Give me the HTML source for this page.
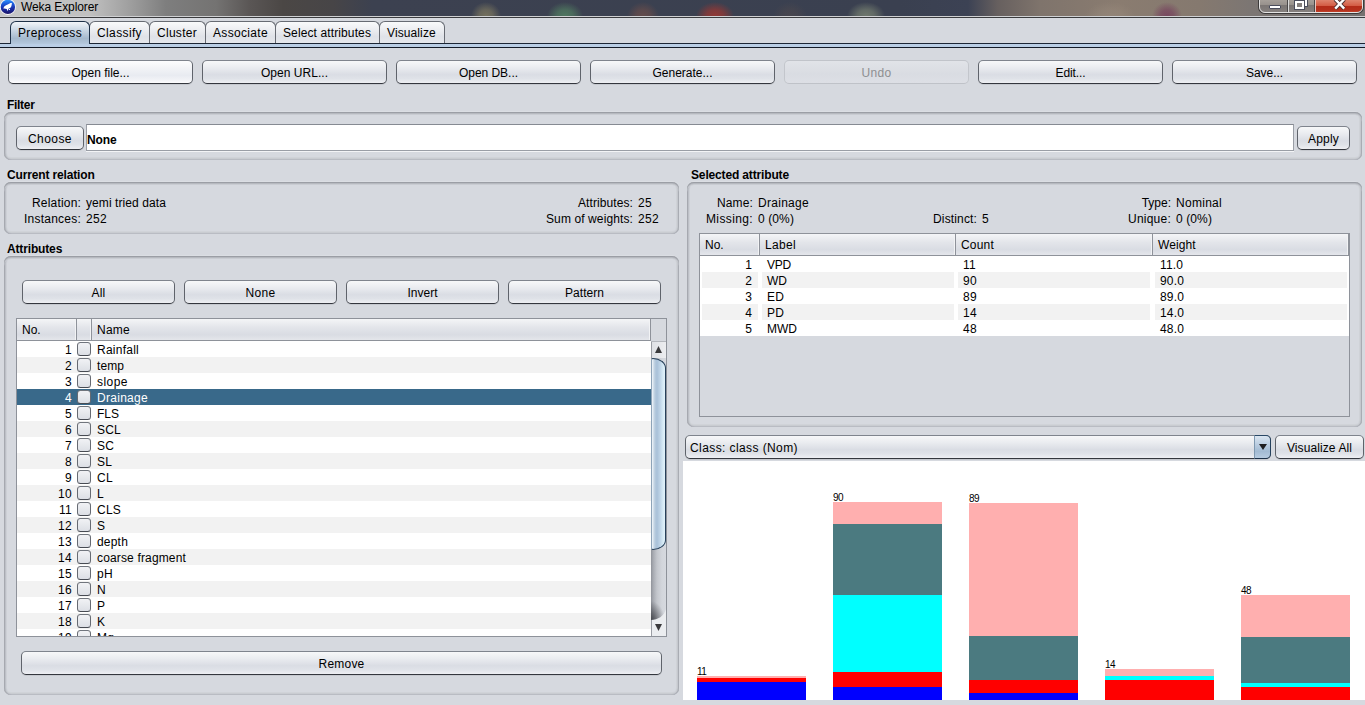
<!DOCTYPE html><html><head><meta charset="utf-8"><title>Weka Explorer</title><style>
*{box-sizing:border-box;margin:0;padding:0}
html,body{width:1365px;height:705px;overflow:hidden;background:#d6d9df;font-family:"Liberation Sans",sans-serif;font-size:12px;color:#000}
.a{position:absolute}
.btn{position:absolute;border:1px solid;border-color:#7f848d #5f636b #34373e #5f636b;border-radius:5px;background:linear-gradient(#f7f8f9 0%,#eaecf0 30%,#dadde4 62%,#dfe2e8 80%,#eeeff3 100%);text-align:center;box-shadow:0 1px 0 #c6c9cf;height:24px;line-height:24px;white-space:nowrap}
.lbl{position:absolute;font-weight:bold;white-space:nowrap;letter-spacing:-0.15px;line-height:14px}
.t{position:absolute;white-space:nowrap;line-height:14px}
.r{text-align:right}
.panel{position:absolute;border-radius:7px;box-shadow:0 -1px 0 0 #dbdee3,inset 0 1px 0 #9b9ea5,inset 0 2px 0 #b6b9bf,inset 0 3px 0 #c9ccd2,inset 1px 0 0 #a6a9b0,inset -1px 0 0 #a9acb3,inset 0 -1px 0 #b9bcc3,inset 2px 0 0 #bdc0c7,inset -2px 0 0 #c5c8ce,inset 0 -2px 0 #c9ccd1,inset 3px 0 0 #cdd0d6,inset -3px 0 0 #cfd2d7,inset 0 -3px 0 #d0d3d8}
.tab{position:absolute;top:21px;border:1px solid #676b73;border-bottom:none;border-radius:6px 6px 0 0;background:linear-gradient(#f9fafb,#e9ebef 45%,#dfe2e8 70%,#e6e8ed);text-align:left;padding-left:7px;line-height:22px;white-space:nowrap;height:22px}
.tab.sel{background:linear-gradient(#f2f5f9 0%,#c6d4e2 40%,#a5b9cd 75%,#b4c8dd 100%);border-color:#1e3148;height:23px}
.hdr{position:absolute;background:linear-gradient(#f4f5f7 0%,#e3e5ea 40%,#d9dce3 75%,#e4e6eb 100%);border-right:1px solid #8e929a;height:21px;line-height:23px;padding-left:5px;white-space:nowrap;box-shadow:inset -1px 0 0 #f2f3f5}
.row{position:absolute;height:16px;line-height:18px;white-space:nowrap}
.row span{line-height:18px}
.cb{position:absolute;width:14px;height:14px;border:1px solid;border-color:#70757d #666a72 #474b53 #666a72;border-radius:3.5px;background:linear-gradient(#f1f2f5,#dcdfe5)}
</style></head><body>
<div class="a" style="left:0;top:0;width:1365px;height:17px;background:linear-gradient(90deg,#c6c6c6 0px,#c0c0c0 90px,#9c9c9c 133px,#7e7e7e 166px,#747372 216px,#5a5655 250px,#4b4745 283px,#474547 333px,#3c4150 372px,#3a4050 900px,#3c4254 968px,#67605f 998px,#7f746c 1040px,#8a7c70 1120px,#85796f 1200px,#7c7673 1250px,#757170 1365px)"></div>
<div class="a" style="left:471px;top:2px;width:30px;height:14px;background:radial-gradient(ellipse 15px 14px at 50% 100%,rgba(135,128,98,0.75),rgba(135,128,98,0.5625) 45%,rgba(135,128,98,0) 100%)"></div>
<div class="a" style="left:547px;top:2px;width:36px;height:14px;background:radial-gradient(ellipse 18px 14px at 50% 100%,rgba(82,128,98,0.85),rgba(82,128,98,0.6375) 45%,rgba(82,128,98,0) 100%)"></div>
<div class="a" style="left:627px;top:2px;width:32px;height:14px;background:radial-gradient(ellipse 16px 14px at 50% 100%,rgba(125,82,72,0.6),rgba(125,82,72,0.44999999999999996) 45%,rgba(125,82,72,0) 100%)"></div>
<div class="a" style="left:696px;top:2px;width:38px;height:14px;background:radial-gradient(ellipse 19px 14px at 50% 100%,rgba(155,55,50,0.9),rgba(155,55,50,0.675) 45%,rgba(155,55,50,0) 100%)"></div>
<div class="a" style="left:773px;top:2px;width:34px;height:14px;background:radial-gradient(ellipse 17px 14px at 50% 100%,rgba(95,80,75,0.35),rgba(95,80,75,0.26249999999999996) 45%,rgba(95,80,75,0) 100%)"></div>
<div class="a" style="left:847px;top:2px;width:38px;height:14px;background:radial-gradient(ellipse 19px 14px at 50% 100%,rgba(128,138,118,0.75),rgba(128,138,118,0.5625) 45%,rgba(128,138,118,0) 100%)"></div>
<div class="a" style="left:1152px;top:2px;width:30px;height:14px;background:radial-gradient(ellipse 15px 14px at 50% 100%,rgba(110,40,85,0.6),rgba(110,40,85,0.44999999999999996) 45%,rgba(110,40,85,0) 100%)"></div>
<div class="a" style="left:1085px;top:2px;width:50px;height:14px;background:radial-gradient(ellipse 25px 14px at 50% 100%,rgba(160,145,130,0.4),rgba(160,145,130,0.30000000000000004) 45%,rgba(160,145,130,0) 100%)"></div>
<div class="a" style="left:0;top:16px;width:1365px;height:1px;background:#cfd0d2"></div>
<div class="a" style="left:0;top:17px;width:1365px;height:1px;background:#3a3b3e"></div>
<svg class="a" style="left:0;top:0" width="17" height="16" viewBox="0 0 17 16"><defs><linearGradient id="ig" x1="0" y1="0" x2="0" y2="1"><stop offset="0" stop-color="#2f96ff"/><stop offset=".3" stop-color="#1c58d8"/><stop offset=".6" stop-color="#1a2fa8"/><stop offset="1" stop-color="#1c1466"/></linearGradient></defs><circle cx="7.9" cy="6.9" r="8" fill="#fff" fill-opacity=".9"/><circle cx="7.9" cy="6.9" r="7.2" fill="url(#ig)"/><path d="M3.3 8.6 L4.2 6.6 L6 5.2 L8.2 4.2 L10.5 3 L11.9 3.1 L11.7 4.8 L11.3 6.5 L10.2 8 L8.7 8.6 L8.3 9.6 L7.6 10.9 L7 10 L6.8 8.9 L5.5 8.7 L4.3 8.4 Z" fill="#fff"/><circle cx="9.5" cy="9.4" r=".55" fill="#fff"/></svg>
<div class="t" style="left:21px;top:0px;font-size:12px;line-height:15px;letter-spacing:-0.1px">Weka Explorer</div>
<div class="a" style="left:1259px;top:-2px;width:104px;height:15px;border:1px solid #e4e4e4;border-radius:0 0 6px 6px;box-shadow:0 0 0 1px #3c3a3a;background:linear-gradient(#a8a29c 0%,#97918c 45%,#7b7674 50%,#85807e 100%);overflow:hidden"><div class="a" style="left:54px;top:0;width:49px;height:15px;background:linear-gradient(#e08a74 0%,#d35c44 45%,#b42c18 50%,#b5301c 75%,#d0583c 100%)"></div><div class="a" style="left:28px;top:0;width:1px;height:15px;background:#dcdcdc;box-shadow:-1px 0 0 #4a4848"></div><div class="a" style="left:55px;top:0;width:1px;height:15px;background:#e8c8c0;box-shadow:-1px 0 0 #4a4848"></div><div class="a" style="left:9px;top:6px;width:12px;height:4px;background:#fff;border:1px solid #4a4d5c;border-radius:1px"></div><div class="a" style="left:39px;top:0px;width:8px;height:7px;border:2px solid #fff;outline:1px solid #4a4d5c"></div><div class="a" style="left:35px;top:2px;width:9px;height:8px;border:2px solid #fff;outline:1px solid #4a4d5c;background:#85807e"></div><svg class="a" style="left:73px;top:0" width="14" height="11" viewBox="0 0 14 11"><path d="M2.2 0.2 L11.2 9.6 M11.2 0.2 L2.2 9.6" stroke="#4a3030" stroke-width="4.2" fill="none"/><path d="M2.2 0.2 L11.2 9.6 M11.2 0.2 L2.2 9.6" stroke="#fff" stroke-width="2.4" fill="none"/></svg></div>
<div class="a" style="left:0;top:43px;width:1365px;height:1px;background:#1c2635"></div>
<div class="a" style="left:0;top:44px;width:1365px;height:3px;background:#bacee5"></div>
<div class="a" style="left:0;top:47px;width:1365px;height:1px;background:#131a26"></div>
<div class="tab" style="left:379px;width:66px"><span style="letter-spacing:0.109px">Visualize</span></div>
<div class="tab" style="left:275px;width:105px"><span style="letter-spacing:0.115px">Select attributes</span></div>
<div class="tab" style="left:205px;width:71px"><span style="letter-spacing:0.331px">Associate</span></div>
<div class="tab" style="left:149px;width:57px"><span style="letter-spacing:0.284px">Cluster</span></div>
<div class="tab" style="left:89px;width:61px"><span style="letter-spacing:0.374px">Classify</span></div>
<div class="tab sel" style="left:10px;width:80px"><span style="letter-spacing:0.331px">Preprocess</span></div>
<div class="btn" style="left:8px;top:60px;width:185px;background:linear-gradient(#fdfdfe 0%,#f3f4f7 30%,#e8ebf1 65%,#f1f2f6 85%,#fcfcfd 100%)">Open file...</div>
<div class="btn" style="left:202px;top:60px;width:185px"><span style="letter-spacing:0.028px">Open URL...</span></div>
<div class="btn" style="left:396px;top:60px;width:185px"><span style="letter-spacing:-0.036px">Open DB...</span></div>
<div class="btn" style="left:590px;top:60px;width:185px">Generate...</div>
<div class="btn" style="left:784px;top:60px;width:185px;color:#8e8f91;border-color:#c1c4ca #c3c6cc #bfc2c8 #c3c6cc;background:linear-gradient(#e1e3e8,#d9dce2 60%,#dddfe5);box-shadow:none"><span style="letter-spacing:0.328px">Undo</span></div>
<div class="btn" style="left:978px;top:60px;width:185px"><span style="letter-spacing:-0.097px">Edit...</span></div>
<div class="btn" style="left:1172px;top:60px;width:185px"><span style="letter-spacing:-0.051px">Save...</span></div>
<div class="lbl" style="left:7px;top:98px;letter-spacing:-0.3px">Filter</div>
<div class="panel" style="left:4px;top:112px;width:1358px;height:48px"></div>
<div class="btn" style="left:16px;top:126px;width:68px"><span style="letter-spacing:0.440px">Choose</span></div>
<div class="a" style="left:86px;top:124px;width:1208px;height:27px;background:#fff;border:1px solid #9a9ea6;border-top-color:#868a92;box-shadow:0 1px 0 #f3f4f6"></div>
<div class="lbl" style="left:87px;top:133px">None</div>
<div class="btn" style="left:1297px;top:126px;width:53px"><span style="letter-spacing:0.196px">Apply</span></div>
<div class="lbl" style="left:7px;top:168px">Current relation</div>
<div class="panel" style="left:4px;top:182px;width:675px;height:52px"></div>
<div class="t r" style="left:0px;width:81px;top:196px"><span style="letter-spacing:0.182px">Relation:</span></div><div class="t" style="left:86px;top:196px"><span style="letter-spacing:0.086px">yemi tried data</span></div>
<div class="t r" style="left:0px;width:81px;top:212px"><span style="letter-spacing:0.230px">Instances:</span></div><div class="t" style="left:86px;top:212px"><span style="letter-spacing:0.326px">252</span></div>
<div class="t r" style="left:500px;width:133px;top:196px"><span style="letter-spacing:0.089px">Attributes:</span></div><div class="t" style="left:638px;top:196px"><span style="letter-spacing:0.326px">25</span></div>
<div class="t r" style="left:500px;width:133px;top:212px"><span style="letter-spacing:0.109px">Sum of weights:</span></div><div class="t" style="left:638px;top:212px"><span style="letter-spacing:0.326px">252</span></div>
<div class="lbl" style="left:7px;top:242px">Attributes</div>
<div class="panel" style="left:4px;top:256px;width:675px;height:439px"></div>
<div class="btn" style="left:22px;top:280px;width:153px"><span style="letter-spacing:0.221px">All</span></div>
<div class="btn" style="left:184px;top:280px;width:153px"><span style="letter-spacing:0.328px">None</span></div>
<div class="btn" style="left:346px;top:280px;width:153px">Invert</div>
<div class="btn" style="left:508px;top:280px;width:153px"><span style="letter-spacing:0.044px">Pattern</span></div>
<div class="a" style="left:16px;top:318px;width:651px;height:319px;background:#fff;border:1px solid #8e929a;overflow:hidden">
<div class="hdr" style="left:0;top:0;width:60px">No.</div><div class="hdr" style="left:60px;top:0;width:15px"></div><div class="hdr" style="left:75px;top:0;width:559px"><span style="letter-spacing:0.248px">Name</span></div><div class="a" style="left:634px;top:0;width:15px;height:22px;background:#d6d9df"></div>
<div class="a" style="left:0;top:21px;width:634px;height:1px;background:#8e929a"></div>
<div class="row" style="left:0;top:22px;width:634px;background:#fff;color:#000"><span class="a r" style="left:0;width:55px"><span style="letter-spacing:0.326px">1</span></span><span class="cb" style="left:60px;top:1px"></span><span class="a" style="left:80px"><span style="letter-spacing:0.248px">Rainfall</span></span></div>
<div class="row" style="left:0;top:38px;width:634px;background:#f2f2f2;color:#000"><span class="a r" style="left:0;width:55px"><span style="letter-spacing:0.326px">2</span></span><span class="cb" style="left:60px;top:1px"></span><span class="a" style="left:80px"><span style="letter-spacing:0.081px">temp</span></span></div>
<div class="row" style="left:0;top:54px;width:634px;background:#fff;color:#000"><span class="a r" style="left:0;width:55px"><span style="letter-spacing:0.326px">3</span></span><span class="cb" style="left:60px;top:1px"></span><span class="a" style="left:80px"><span style="letter-spacing:0.463px">slope</span></span></div>
<div class="row" style="left:0;top:70px;width:634px;background:#39698a;color:#fff"><span class="a r" style="left:0;width:55px"><span style="letter-spacing:0.326px">4</span></span><span class="cb" style="left:60px;top:1px"></span><span class="a" style="left:80px"><span style="letter-spacing:0.288px">Drainage</span></span></div>
<div class="row" style="left:0;top:86px;width:634px;background:#fff;color:#000"><span class="a r" style="left:0;width:55px"><span style="letter-spacing:0.326px">5</span></span><span class="cb" style="left:60px;top:1px"></span><span class="a" style="left:80px">FLS</span></div>
<div class="row" style="left:0;top:102px;width:634px;background:#f2f2f2;color:#000"><span class="a r" style="left:0;width:55px"><span style="letter-spacing:0.326px">6</span></span><span class="cb" style="left:60px;top:1px"></span><span class="a" style="left:80px"><span style="letter-spacing:0.219px">SCL</span></span></div>
<div class="row" style="left:0;top:118px;width:634px;background:#fff;color:#000"><span class="a r" style="left:0;width:55px"><span style="letter-spacing:0.326px">7</span></span><span class="cb" style="left:60px;top:1px"></span><span class="a" style="left:80px"><span style="letter-spacing:0.165px">SC</span></span></div>
<div class="row" style="left:0;top:134px;width:634px;background:#f2f2f2;color:#000"><span class="a r" style="left:0;width:55px"><span style="letter-spacing:0.326px">8</span></span><span class="cb" style="left:60px;top:1px"></span><span class="a" style="left:80px"><span style="letter-spacing:0.161px">SL</span></span></div>
<div class="row" style="left:0;top:150px;width:634px;background:#fff;color:#000"><span class="a r" style="left:0;width:55px"><span style="letter-spacing:0.326px">9</span></span><span class="cb" style="left:60px;top:1px"></span><span class="a" style="left:80px"><span style="letter-spacing:0.330px">CL</span></span></div>
<div class="row" style="left:0;top:166px;width:634px;background:#f2f2f2;color:#000"><span class="a r" style="left:0;width:55px"><span style="letter-spacing:0.326px">10</span></span><span class="cb" style="left:60px;top:1px"></span><span class="a" style="left:80px"><span style="letter-spacing:0.326px">L</span></span></div>
<div class="row" style="left:0;top:182px;width:634px;background:#fff;color:#000"><span class="a r" style="left:0;width:55px"><span style="letter-spacing:0.326px">11</span></span><span class="cb" style="left:60px;top:1px"></span><span class="a" style="left:80px"><span style="letter-spacing:0.219px">CLS</span></span></div>
<div class="row" style="left:0;top:198px;width:634px;background:#f2f2f2;color:#000"><span class="a r" style="left:0;width:55px"><span style="letter-spacing:0.326px">12</span></span><span class="cb" style="left:60px;top:1px"></span><span class="a" style="left:80px">S</span></div>
<div class="row" style="left:0;top:214px;width:634px;background:#fff;color:#000"><span class="a r" style="left:0;width:55px"><span style="letter-spacing:0.326px">13</span></span><span class="cb" style="left:60px;top:1px"></span><span class="a" style="left:80px"><span style="letter-spacing:0.194px">depth</span></span></div>
<div class="row" style="left:0;top:230px;width:634px;background:#f2f2f2;color:#000"><span class="a r" style="left:0;width:55px"><span style="letter-spacing:0.326px">14</span></span><span class="cb" style="left:60px;top:1px"></span><span class="a" style="left:80px"><span style="letter-spacing:0.153px">coarse fragment</span></span></div>
<div class="row" style="left:0;top:246px;width:634px;background:#fff;color:#000"><span class="a r" style="left:0;width:55px"><span style="letter-spacing:0.326px">15</span></span><span class="cb" style="left:60px;top:1px"></span><span class="a" style="left:80px"><span style="letter-spacing:0.330px">pH</span></span></div>
<div class="row" style="left:0;top:262px;width:634px;background:#f2f2f2;color:#000"><span class="a r" style="left:0;width:55px"><span style="letter-spacing:0.326px">16</span></span><span class="cb" style="left:60px;top:1px"></span><span class="a" style="left:80px"><span style="letter-spacing:0.334px">N</span></span></div>
<div class="row" style="left:0;top:278px;width:634px;background:#fff;color:#000"><span class="a r" style="left:0;width:55px"><span style="letter-spacing:0.326px">17</span></span><span class="cb" style="left:60px;top:1px"></span><span class="a" style="left:80px">P</span></div>
<div class="row" style="left:0;top:294px;width:634px;background:#f2f2f2;color:#000"><span class="a r" style="left:0;width:55px"><span style="letter-spacing:0.326px">18</span></span><span class="cb" style="left:60px;top:1px"></span><span class="a" style="left:80px">K</span></div>
<div class="row" style="left:0;top:310px;width:634px;background:#fff;color:#000"><span class="a r" style="left:0;width:55px"><span style="letter-spacing:0.326px">19</span></span><span class="cb" style="left:60px;top:1px"></span><span class="a" style="left:80px"><span style="letter-spacing:0.165px">Mg</span></span></div>
<div class="a" style="left:634px;top:22px;width:15px;height:295px;background:linear-gradient(90deg,#8f9299 0,#a6a9b0 2px,#c3c6cc 6px,#d3d6dc 11px,#d6d9df 15px)"></div>
<div class="a" style="left:634px;top:280px;width:15px;height:22px;background:radial-gradient(ellipse 14px 20px at 0% 100%,rgba(50,52,58,.85),rgba(50,52,58,.35) 60%,rgba(50,52,58,0) 100%)"></div>
<div class="a" style="left:634px;top:22px;width:15px;height:17px;background:linear-gradient(90deg,#9a9da4 0,#9a9da4 1px,#dfe1e5 1px,#ecedf0 15px);border-top:1px solid #b4b7bd"></div>
<svg class="a" style="left:638px;top:27px" width="8" height="7"><path d="M0 7 L3.5 0 L7 7 Z" fill="#3a3a3c"/></svg>
<div class="a" style="left:634px;top:39px;width:15px;height:192px;border:1px solid #27405a;border-left-color:#8da3b8;border-radius:2px 13px 13px 2px / 2px 10px 10px 2px;background:linear-gradient(90deg,#f2f6fa 0,#dbe6f0 1px,#b6cadd 3px,#a9c1d9 5px,#bdd3e6 8px,#d6eaf5 11px,#e6f5fc 14px)"></div>
<svg class="a" style="left:634px;top:288px" width="15" height="29"><path d="M0 13 C7 13 13 9 15 2 L15 29 L0 29 Z" fill="#ebedf0"/><path d="M0 13 L1 13 L1 29 L0 29 Z" fill="#9a9da4"/><path d="M4 17 L11 17 L7.5 24 Z" fill="#3a3a3c"/></svg>
</div>
<div class="btn" style="left:21px;top:651px;width:641px"><span style="letter-spacing:0.219px">Remove</span></div>
<div class="lbl" style="left:691px;top:168px">Selected attribute</div>
<div class="panel" style="left:687px;top:182px;width:675px;height:245px"></div>
<div class="t r" style="left:690px;width:63px;top:196px"><span style="letter-spacing:0.131px">Name:</span></div><div class="t" style="left:758px;top:196px"><span style="letter-spacing:0.288px">Drainage</span></div>
<div class="t r" style="left:690px;width:63px;top:212px"><span style="letter-spacing:0.374px">Missing:</span></div><div class="t" style="left:758px;top:212px"><span style="letter-spacing:0.109px">0 (0%)</span></div>
<div class="t r" style="left:900px;width:77px;top:212px"><span style="letter-spacing:0.147px">Distinct:</span></div><div class="t" style="left:982px;top:212px">5</div>
<div class="t r" style="left:1100px;width:71px;top:196px">Type:</div><div class="t" style="left:1176px;top:196px"><span style="letter-spacing:0.283px">Nominal</span></div>
<div class="t r" style="left:1100px;width:71px;top:212px"><span style="letter-spacing:0.234px">Unique:</span></div><div class="t" style="left:1176px;top:212px"><span style="letter-spacing:0.109px">0 (0%)</span></div>
<div class="a" style="left:699px;top:233px;width:651px;height:184px;border:1px solid #8e929a;overflow:hidden">
<div class="hdr" style="left:0;top:0;width:60px">No.</div><div class="hdr" style="left:60px;top:0;width:196px"><span style="letter-spacing:0.328px">Label</span></div><div class="hdr" style="left:256px;top:0;width:197px"><span style="letter-spacing:0.196px">Count</span></div><div class="hdr" style="left:453px;top:0;width:196px;"><span style="letter-spacing:0.109px">Weight</span></div>
<div class="a" style="left:0;top:21px;width:650px;height:1px;background:#8e929a"></div>
<div class="row" style="left:0;top:22px;width:649px;background:#fff"><span class="a" style="left:2px;width:56px;height:16px;background:#fff"></span><span class="a" style="left:62px;width:192px;height:16px;background:#fff"></span><span class="a" style="left:258px;width:192px;height:16px;background:#fff"></span><span class="a" style="left:455px;width:192px;height:16px;background:#fff"></span><span class="a r" style="left:0;width:52px">1</span><span class="a" style="left:67px"><span style="letter-spacing:-0.225px">VPD</span></span><span class="a" style="left:263px"><span style="letter-spacing:0.326px">11</span></span><span class="a" style="left:460px"><span style="letter-spacing:0.161px">11.0</span></span></div>
<div class="row" style="left:0;top:38px;width:649px;background:#fff"><span class="a" style="left:2px;width:56px;height:16px;background:#f2f2f2"></span><span class="a" style="left:62px;width:192px;height:16px;background:#f2f2f2"></span><span class="a" style="left:258px;width:192px;height:16px;background:#f2f2f2"></span><span class="a" style="left:455px;width:192px;height:16px;background:#f2f2f2"></span><span class="a r" style="left:0;width:52px">2</span><span class="a" style="left:67px">WD</span><span class="a" style="left:263px"><span style="letter-spacing:0.326px">90</span></span><span class="a" style="left:460px"><span style="letter-spacing:0.161px">90.0</span></span></div>
<div class="row" style="left:0;top:54px;width:649px;background:#fff"><span class="a" style="left:2px;width:56px;height:16px;background:#fff"></span><span class="a" style="left:62px;width:192px;height:16px;background:#fff"></span><span class="a" style="left:258px;width:192px;height:16px;background:#fff"></span><span class="a" style="left:455px;width:192px;height:16px;background:#fff"></span><span class="a r" style="left:0;width:52px">3</span><span class="a" style="left:67px"><span style="letter-spacing:0.165px">ED</span></span><span class="a" style="left:263px"><span style="letter-spacing:0.326px">89</span></span><span class="a" style="left:460px"><span style="letter-spacing:0.161px">89.0</span></span></div>
<div class="row" style="left:0;top:70px;width:649px;background:#fff"><span class="a" style="left:2px;width:56px;height:16px;background:#f2f2f2"></span><span class="a" style="left:62px;width:192px;height:16px;background:#f2f2f2"></span><span class="a" style="left:258px;width:192px;height:16px;background:#f2f2f2"></span><span class="a" style="left:455px;width:192px;height:16px;background:#f2f2f2"></span><span class="a r" style="left:0;width:52px">4</span><span class="a" style="left:67px"><span style="letter-spacing:0.165px">PD</span></span><span class="a" style="left:263px"><span style="letter-spacing:0.326px">14</span></span><span class="a" style="left:460px"><span style="letter-spacing:0.161px">14.0</span></span></div>
<div class="row" style="left:0;top:86px;width:649px;background:#fff"><span class="a" style="left:2px;width:56px;height:16px;background:#fff"></span><span class="a" style="left:62px;width:192px;height:16px;background:#fff"></span><span class="a" style="left:258px;width:192px;height:16px;background:#fff"></span><span class="a" style="left:455px;width:192px;height:16px;background:#fff"></span><span class="a r" style="left:0;width:52px">5</span><span class="a" style="left:67px">MWD</span><span class="a" style="left:263px"><span style="letter-spacing:0.326px">48</span></span><span class="a" style="left:460px"><span style="letter-spacing:0.161px">48.0</span></span></div>
</div>
<div class="btn" style="left:685px;top:435px;width:586px;text-align:left;padding-left:4px"><span style="letter-spacing:0.407px">Class: class (Nom)</span></div>
<div class="a" style="left:1254px;top:435px;width:17px;height:24px;border:1px solid;border-color:#2a4866 #24405c #1c3048 #7f98b0;border-radius:0 5px 5px 0;background:linear-gradient(#dbe6f1 0%,#b9cce0 40%,#a3bbd3 70%,#b7cbe0 100%)"></div>
<svg class="a" style="left:1259px;top:444px" width="8" height="6"><path d="M0 0 L8 0 L4 6 Z" fill="#1e1e20"/></svg>
<div class="btn" style="left:1275px;top:435px;width:89px"><span style="letter-spacing:0.101px">Visualize All</span></div>
<div class="a" style="left:683px;top:461px;width:682px;height:239px;background:#fff"></div>
<div class="a" style="left:697px;top:676px;width:109px;height:2px;background:#ffafaf"></div>
<div class="a" style="left:697px;top:678px;width:109px;height:4px;background:#ff0000"></div>
<div class="a" style="left:697px;top:682px;width:109px;height:18px;background:#0000ff"></div>
<div class="t" style="left:697px;top:667px;font-size:10px;line-height:10px;letter-spacing:-0.55px">11</div>
<div class="a" style="left:833px;top:502px;width:109px;height:22px;background:#ffafaf"></div>
<div class="a" style="left:833px;top:524px;width:109px;height:71px;background:#4b7a80"></div>
<div class="a" style="left:833px;top:595px;width:109px;height:77px;background:#00ffff"></div>
<div class="a" style="left:833px;top:672px;width:109px;height:15px;background:#ff0000"></div>
<div class="a" style="left:833px;top:687px;width:109px;height:13px;background:#0000ff"></div>
<div class="t" style="left:833px;top:493px;font-size:10px;line-height:10px;letter-spacing:-0.55px">90</div>
<div class="a" style="left:969px;top:503px;width:109px;height:133px;background:#ffafaf"></div>
<div class="a" style="left:969px;top:636px;width:109px;height:44px;background:#4b7a80"></div>
<div class="a" style="left:969px;top:680px;width:109px;height:13px;background:#ff0000"></div>
<div class="a" style="left:969px;top:693px;width:109px;height:7px;background:#0000ff"></div>
<div class="t" style="left:969px;top:494px;font-size:10px;line-height:10px;letter-spacing:-0.55px">89</div>
<div class="a" style="left:1105px;top:669px;width:109px;height:7px;background:#ffafaf"></div>
<div class="a" style="left:1105px;top:676px;width:109px;height:4px;background:#00ffff"></div>
<div class="a" style="left:1105px;top:680px;width:109px;height:20px;background:#ff0000"></div>
<div class="t" style="left:1105px;top:660px;font-size:10px;line-height:10px;letter-spacing:-0.55px">14</div>
<div class="a" style="left:1241px;top:595px;width:109px;height:42px;background:#ffafaf"></div>
<div class="a" style="left:1241px;top:637px;width:109px;height:46px;background:#4b7a80"></div>
<div class="a" style="left:1241px;top:683px;width:109px;height:4px;background:#00ffff"></div>
<div class="a" style="left:1241px;top:687px;width:109px;height:13px;background:#ff0000"></div>
<div class="t" style="left:1241px;top:586px;font-size:10px;line-height:10px;letter-spacing:-0.55px">48</div>
</body></html>
